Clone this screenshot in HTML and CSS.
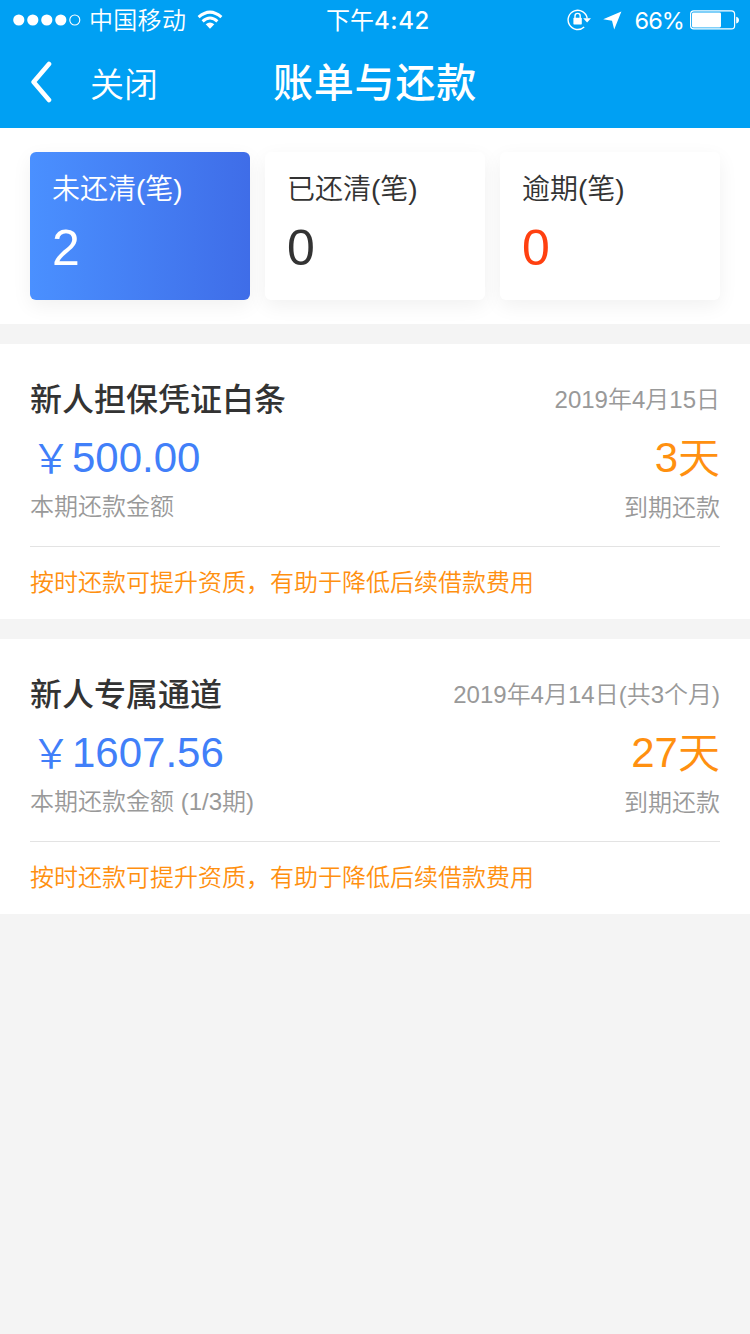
FILE: index.html
```html
<!DOCTYPE html>
<html lang="zh-CN">
<head>
<meta charset="utf-8">
<title>账单与还款</title>
<link rel="stylesheet" href="styles.css">
</head>
<body>
<header class="header">
  <div class="status">
    <div class="status-left">
      <svg class="signal" width="68" height="12" viewBox="0 0 68 12"><g fill="#fff"><circle cx="5.8" cy="6" r="5.6"/><circle cx="19.8" cy="6" r="5.6"/><circle cx="33.8" cy="6" r="5.6"/><circle cx="47.8" cy="6" r="5.6"/></g><circle cx="61.8" cy="6" r="5" fill="none" stroke="#fff" stroke-width="1.1"/></svg>
      <span class="carrier">中国移动</span>
      <svg class="wifi" width="26" height="20" viewBox="0 0 26 20"><g fill="none" stroke="#fff" stroke-width="3"><path d="M1.6 7.2Q13-3 24.4 7.2"/><path d="M5.6 11.3Q13 4.7 20.4 11.3"/></g><path d="M8.7 14.3Q13 10.6 17.3 14.3L13 18.8Z" fill="#fff"/></svg>
    </div>
    <div class="time">下午<span class="clock">4:42</span></div>
    <div class="status-right">
      <svg width="24" height="22" viewBox="0 0 24 22"><path d="M17.2 18A9.6 9.6 0 1 1 20.2 9.5" fill="none" stroke="#fff" stroke-width="1.4"/><path d="M16.2 9.3H24L20.1 13.4Z" fill="#fff"/><rect x="6.4" y="8.8" width="8.4" height="6.6" rx=".6" fill="#fff"/><path d="M8 9.5V7a2.6 2.6 0 0 1 5.2 0v2.5" fill="none" stroke="#fff" stroke-width="1.4"/></svg>
      <svg class="locate" width="19" height="19" viewBox="0 0 19 19"><path d="M18.4.4L.2 8.2 9 9.8 11.2 18.4Z" fill="#fff"/></svg>
      <span class="percent">66%</span>
      <svg class="battery" width="50" height="20" viewBox="0 0 50 20"><rect x=".6" y=".9" width="44" height="18" rx="3.2" fill="none" stroke="#fff" stroke-width="1.2"/><rect x="2" y="2.4" width="29" height="15" rx="1.3" fill="#fff"/><path d="M46.2 6.7q2.8.7 2.8 3.4t-2.8 3.4Z" fill="#fff"/></svg>
    </div>
  </div>
  <nav class="nav">
    <div class="nav-left">
      <svg class="back" width="22" height="42" viewBox="0 0 22 42"><path d="M19 3L3.6 21 19 39" fill="none" stroke="#fff" stroke-width="4.6" stroke-linecap="round" stroke-linejoin="round"/></svg>
      <span class="close">关闭</span>
    </div>
    <h1 class="title">账单与还款</h1>
  </nav>
</header>
<section class="tabs">
  <div class="tab tab-active"><span class="tab-label">未还清(笔)</span><span class="tab-count">2</span></div>
  <div class="tab"><span class="tab-label">已还清(笔)</span><span class="tab-count">0</span></div>
  <div class="tab"><span class="tab-label">逾期(笔)</span><span class="tab-count overdue">0</span></div>
</section>
<section class="bill">
  <div class="row row-head"><h2 class="name">新人担保凭证白条</h2><span class="date">2019年4月15日</span></div>
  <div class="row row-main"><span class="amount"><span class="yen">￥</span>500.00</span><span class="days">3<span class="unit">天</span></span></div>
  <div class="row row-sub"><span>本期还款金额</span><span class="due">到期还款</span></div>
  <p class="tip">按时还款可提升资质，有助于降低后续借款费用</p>
</section>
<section class="bill">
  <div class="row row-head"><h2 class="name">新人专属通道</h2><span class="date">2019年4月14日(共3个月)</span></div>
  <div class="row row-main"><span class="amount"><span class="yen">￥</span>1607.56</span><span class="days">27<span class="unit">天</span></span></div>
  <div class="row row-sub"><span>本期还款金额 (1/3期)</span><span class="due">到期还款</span></div>
  <p class="tip">按时还款可提升资质，有助于降低后续借款费用</p>
</section>
</body>
</html>
```

FILE: styles.css
```css
* { box-sizing: border-box; }
body {
  margin: 0;
  min-height: 1334px;
  background: #f4f4f4;
  color: #333;
  font-family: "Liberation Sans", "Noto Sans CJK SC", sans-serif;
  font-weight: 350;
}
h1, h2, p { margin: 0; }
svg { display: block; flex: none; }
.header { height: 128px; background: #00a0f3; color: #fff; }
.status {
  display: grid;
  grid-template-columns: 1fr auto 1fr;
  align-items: center;
  height: 40px;
  padding: 0 10px 0 13px;
  font-size: 24px;
  line-height: 40px;
}
.status-left, .status-right { display: flex; align-items: center; }
.status-right { justify-content: flex-end; }
.carrier { padding-top: 2px; margin-left: 8px; line-height: 38px; letter-spacing: .3px; }
.wifi { margin-left: 11px; }
.time { display: flex; padding: 2px 0 0 3px; line-height: 38px; font-weight: 400; }
.clock { font-family: Inter, sans-serif; font-weight: 500; letter-spacing: .6px; }
.locate { margin-left: 12px; }
.percent { padding-top: 2px; margin-left: 12px; line-height: 38px; font-family: Inter, sans-serif; font-weight: 400; font-size: 23.5px; letter-spacing: -.9px; }
.battery { margin-left: 6px; }
.nav {
  display: grid;
  grid-template-columns: 1fr auto 1fr;
  align-items: center;
  height: 88px;
  padding: 0 30px;
}
.nav-left { display: flex; align-items: center; gap: 38px; }
.back { margin-bottom: 4px; }
.close { padding-top: 2px; font-size: 34px; line-height: 50px; }
.title { padding-bottom: 2px; font-size: 40px; font-weight: 500; line-height: 60px; letter-spacing: .8px; }
.tabs { display: flex; gap: 15px; height: 196px; padding: 24px 30px; background: #fff; }
.tab {
  display: flex;
  flex: 1;
  flex-direction: column;
  height: 148px;
  padding: 18px 22px;
  border-radius: 6px;
  background: #fff;
  box-shadow: 0 6px 20px rgba(0, 0, 0, .06);
}
.tab-active { background: linear-gradient(90deg, #4a90ff, #3f6de8); color: #fff; }
.tab-label { font-size: 28px; line-height: 40px; }
.tab-count { margin-top: 8px; font-size: 50px; line-height: 60px; }
.overdue { color: #ff4010; }
.bill { height: 275px; margin-top: 20px; padding: 32px 30px 0; background: #fff; }
.row { display: flex; justify-content: space-between; align-items: center; }
.row-head { height: 48px; }
.name { font-size: 32px; font-weight: 500; line-height: 48px; }
.date { color: #999; font-size: 24px; line-height: 48px; }
.row-main { height: 68px; font-size: 42px; line-height: 68px; }
.amount, .days { display: flex; }
.amount { color: #417ff9; }
.yen { width: 42px; padding-top: 2px; font-size: 40px; line-height: 66px; text-align: center; }
.days { color: #ff9010; }
.unit { padding-top: 2px; line-height: 66px; }
.row-sub { align-items: flex-start; height: 54px; color: #999; font-size: 24px; line-height: 30px; }
.due { padding-top: 1px; }
.tip { height: 73px; border-top: 1px solid #e3e3e3; color: #ff9010; font-size: 24px; line-height: 71px; }
```
